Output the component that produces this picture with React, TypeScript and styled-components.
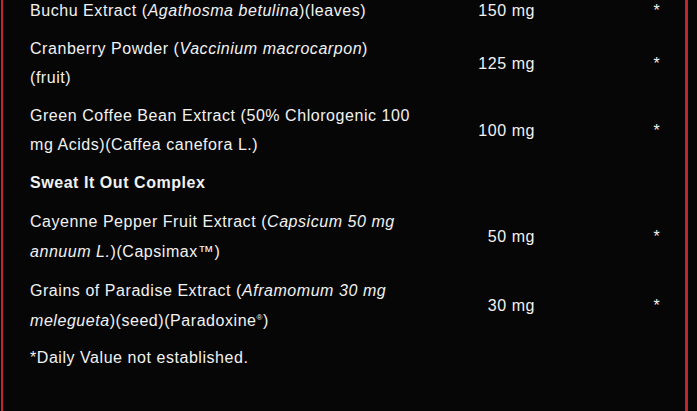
import React from "react";
import styled, { createGlobalStyle } from "styled-components";

interface Ingredient {
  name: React.ReactNode;
  amount?: string;
  dv?: string;
  heading?: boolean;
  tall?: boolean;
}

const GlobalStyle = createGlobalStyle`
  html, body {
    margin: 0;
    padding: 0;
    background: #060606;
  }
  body {
    font-family: "Liberation Sans", Arial, sans-serif;
    color: #f2f2f2;
    overflow: hidden;
  }
`;

const Page = styled.div`
  width: 697px;
  height: 411px;
  background: #060606;
  overflow: hidden;
`;

const Card = styled.div`
  margin-left: 1px;
  width: 682px;
  height: 411px;
  border-left: 2px solid #c1262d;
  border-right: 3px solid #c1262d;
  background: #060606;
  overflow: hidden;
`;

const Table = styled.div`
  margin-top: -8px;
  padding-left: 27px;
  display: flex;
  flex-direction: column;
  font-size: 16px;
  letter-spacing: 0.55px;
  line-height: 29px;
`;

const Row = styled.div<{ $tall?: boolean }>`
  display: grid;
  grid-template-columns: 382px 123px 1fr;
  align-items: center;
  padding: 4px 0 5px;
  line-height: ${(p) => (p.$tall ? "30px" : "29px")};
`;

const Name = styled.div<{ $heading?: boolean }>`
  font-weight: ${(p) => (p.$heading ? 700 : 400)};
`;

const Amount = styled.div`
  text-align: right;
`;

const Dv = styled.div`
  width: 20px;
  margin-left: 112px;
  text-align: center;
`;

const Reg = styled.sup`
  font-size: 8px;
  line-height: 0;
`;

const Footnote = styled.div`
  padding-top: 2px;
`;

const items: Ingredient[] = [
  {
    name: (
      <>
        Buchu Extract (<i>Agathosma betulina</i>)(leaves)
      </>
    ),
    amount: "150 mg",
    dv: "*",
  },
  {
    name: (
      <>
        Cranberry Powder (<i>Vaccinium macrocarpon</i>) (fruit)
      </>
    ),
    amount: "125 mg",
    dv: "*",
  },
  {
    name: "Green Coffee Bean Extract (50% Chlorogenic 100 mg Acids)(Caffea canefora L.)",
    amount: "100 mg",
    dv: "*",
  },
  { name: "Sweat It Out Complex", heading: true, tall: true },
  {
    name: (
      <>
        Cayenne Pepper Fruit Extract (<i>Capsicum 50 mg annuum L.</i>)(Capsimax™)
      </>
    ),
    amount: "50 mg",
    dv: "*",
    tall: true,
  },
  {
    name: (
      <>
        Grains of Paradise Extract (<i>Aframomum 30 mg melegueta</i>)(seed)(Paradoxine<Reg>®</Reg>)
      </>
    ),
    amount: "30 mg",
    dv: "*",
    tall: true,
  },
];

export default function App() {
  return (
    <Page>
      <GlobalStyle />
      <Card>
        <Table>
          {items.map((item, i) => (
            <Row key={i} $tall={item.tall}>
              <Name $heading={item.heading}>{item.name}</Name>
              <Amount>{item.amount}</Amount>
              <Dv>{item.dv}</Dv>
            </Row>
          ))}
          <Footnote>*Daily Value not established.</Footnote>
        </Table>
      </Card>
    </Page>
  );
}
